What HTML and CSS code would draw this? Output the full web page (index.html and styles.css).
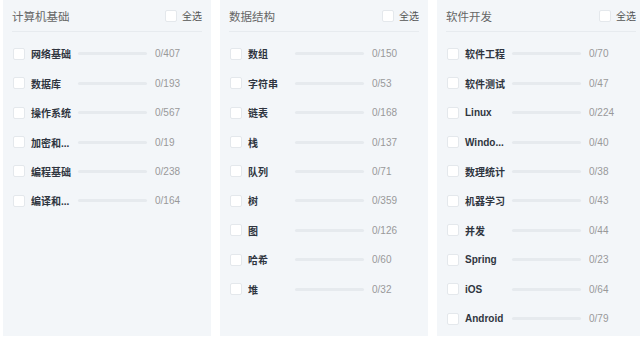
FILE: index.html
```html
<!DOCTYPE html>
<html lang="zh-CN">
<head>
    <meta charset="UTF-8">
    <title>题库分类</title>
    <link rel="stylesheet" href="styles.css">
</head>
<body>
    <div class="panels">
        <div class="panel">
            <div class="panel-head">
                <span class="panel-title">计算机基础</span>
                <label class="check-all"><span class="box"></span>全选</label>
            </div>
            <ul class="topics">
                <li><span class="box"></span><span class="name">网络基础</span><span class="bar"></span><span class="count">0/407</span></li>
                <li><span class="box"></span><span class="name">数据库</span><span class="bar"></span><span class="count">0/193</span></li>
                <li><span class="box"></span><span class="name">操作系统</span><span class="bar"></span><span class="count">0/567</span></li>
                <li><span class="box"></span><span class="name">加密和...</span><span class="bar"></span><span class="count">0/19</span></li>
                <li><span class="box"></span><span class="name">编程基础</span><span class="bar"></span><span class="count">0/238</span></li>
                <li><span class="box"></span><span class="name">编译和...</span><span class="bar"></span><span class="count">0/164</span></li>
            </ul>
        </div>

        <div class="panel">
            <div class="panel-head">
                <span class="panel-title">数据结构</span>
                <label class="check-all"><span class="box"></span>全选</label>
            </div>
            <ul class="topics">
                <li><span class="box"></span><span class="name">数组</span><span class="bar"></span><span class="count">0/150</span></li>
                <li><span class="box"></span><span class="name">字符串</span><span class="bar"></span><span class="count">0/53</span></li>
                <li><span class="box"></span><span class="name">链表</span><span class="bar"></span><span class="count">0/168</span></li>
                <li><span class="box"></span><span class="name">栈</span><span class="bar"></span><span class="count">0/137</span></li>
                <li><span class="box"></span><span class="name">队列</span><span class="bar"></span><span class="count">0/71</span></li>
                <li><span class="box"></span><span class="name">树</span><span class="bar"></span><span class="count">0/359</span></li>
                <li><span class="box"></span><span class="name">图</span><span class="bar"></span><span class="count">0/126</span></li>
                <li><span class="box"></span><span class="name">哈希</span><span class="bar"></span><span class="count">0/60</span></li>
                <li><span class="box"></span><span class="name">堆</span><span class="bar"></span><span class="count">0/32</span></li>
            </ul>
        </div>

        <div class="panel">
            <div class="panel-head">
                <span class="panel-title">软件开发</span>
                <label class="check-all"><span class="box"></span>全选</label>
            </div>
            <ul class="topics">
                <li><span class="box"></span><span class="name">软件工程</span><span class="bar"></span><span class="count">0/70</span></li>
                <li><span class="box"></span><span class="name">软件测试</span><span class="bar"></span><span class="count">0/47</span></li>
                <li><span class="box"></span><span class="name">Linux</span><span class="bar"></span><span class="count">0/224</span></li>
                <li><span class="box"></span><span class="name">Windo...</span><span class="bar"></span><span class="count">0/40</span></li>
                <li><span class="box"></span><span class="name">数理统计</span><span class="bar"></span><span class="count">0/38</span></li>
                <li><span class="box"></span><span class="name">机器学习</span><span class="bar"></span><span class="count">0/43</span></li>
                <li><span class="box"></span><span class="name">并发</span><span class="bar"></span><span class="count">0/44</span></li>
                <li><span class="box"></span><span class="name">Spring</span><span class="bar"></span><span class="count">0/23</span></li>
                <li><span class="box"></span><span class="name">iOS</span><span class="bar"></span><span class="count">0/64</span></li>
                <li><span class="box"></span><span class="name">Android</span><span class="bar"></span><span class="count">0/79</span></li>
            </ul>
        </div>
    </div>
</body>
</html>
```

FILE: styles.css
```css
body {
    margin: 0;
    background: #fff;
    font-family: 'Liberation Sans', 'Noto Sans CJK SC', sans-serif;
    overflow: hidden;
}
.panels {
    display: flex;
    gap: 9px;
    padding-left: 3px;
}
.panel {
    flex: 0 0 208px;
    height: 336px;
    box-sizing: border-box;
    padding: 0 9px;
    background: #f3f6f9;
}
.panel-head {
    display: flex;
    align-items: center;
    justify-content: space-between;
    height: 31px;
    border-bottom: 1px solid #e7ebef;
}
.panel-title {
    font-size: 11.5px;
    color: #666;
}
.check-all {
    display: flex;
    align-items: center;
    gap: 5px;
    font-size: 10px;
    color: #555;
}
.box {
    flex: 0 0 auto;
    width: 12px;
    height: 12px;
    box-sizing: border-box;
    background: #fff;
    border: 1px solid #e4e8ec;
    border-radius: 2px;
}
.topics {
    list-style: none;
    margin: 0;
    padding: 7px 0 0;
}
.topics li {
    display: flex;
    align-items: center;
    height: 29.45px;
    padding-left: 1px;
}
.name {
    width: 42px;
    margin: 0 5px 0 6px;
    font-size: 10px;
    font-weight: bold;
    color: #2f3540;
    white-space: nowrap;
}
.bar {
    width: 69px;
    height: 3px;
    border-radius: 2px;
    background: #e6eaee;
}
.count {
    margin-left: 8px;
    font-size: 10px;
    color: #999;
}
```
